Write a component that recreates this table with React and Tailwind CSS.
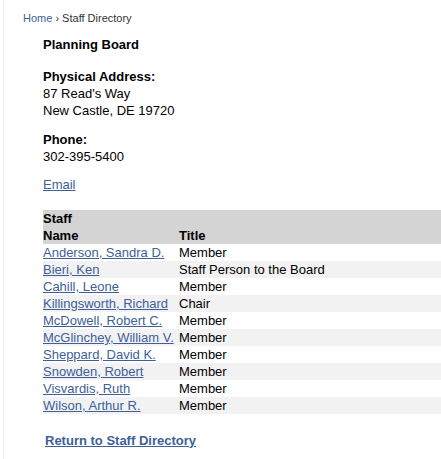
const staff = [
  { name: 'Anderson, Sandra D.', title: 'Member' },
  { name: 'Bieri, Ken', title: 'Staff Person to the Board' },
  { name: 'Cahill, Leone', title: 'Member' },
  { name: 'Killingsworth, Richard', title: 'Chair' },
  { name: 'McDowell, Robert C.', title: 'Member' },
  { name: 'McGlinchey, William V.', title: 'Member' },
  { name: 'Sheppard, David K.', title: 'Member' },
  { name: 'Snowden, Robert', title: 'Member' },
  { name: 'Visvardis, Ruth', title: 'Member' },
  { name: 'Wilson, Arthur R.', title: 'Member' },
]

export default function App() {
  return (
    <div className="min-h-screen bg-white font-['Liberation_Sans',Arial,sans-serif] text-black">
      <div className="ml-[3px] min-h-screen border-l border-[#f3f3f3] pb-4">
        {/* breadcrumb */}
        <div className="pl-[19px] pt-[11px] text-[11px] leading-[14px] text-[#333]">
          <a href="#" className="text-[#3e5f99]">Home</a> › Staff Directory
        </div>

        <div className="pl-[39px] text-[13px] leading-[17px]">
          <h1 className="mt-[10.5px] font-bold">Planning Board</h1>

          <div className="mt-[15px]">
            <div className="font-bold">Physical Address:</div>
            <div>87 Read's Way</div>
            <div>New Castle, DE 19720</div>
          </div>

          <div className="mt-[12px]">
            <div className="font-bold">Phone:</div>
            <div>302-395-5400</div>
          </div>

          <div className="mt-[11px]">
            <a href="#" className="text-[#3e5f99] underline">Email</a>
          </div>

          <table className="mt-[17.5px] w-full border-collapse">
            <thead className="bg-[#d4d4d4]">
              <tr>
                <th colSpan={2} className="h-[17px] p-0 text-left font-bold">Staff</th>
              </tr>
              <tr>
                <th className="h-[17px] w-[136px] p-0 text-left font-bold">Name</th>
                <th className="h-[17px] p-0 text-left font-bold">Title</th>
              </tr>
            </thead>
            <tbody>
              {staff.map((s, i) => (
                <tr key={s.name} className={i % 2 === 1 ? 'bg-[#f2f2f2]' : 'bg-white'}>
                  <td className="h-[17px] whitespace-nowrap p-0">
                    <a href="#" className="text-[#3e5f99] underline">{s.name}</a>
                  </td>
                  <td className="h-[17px] whitespace-nowrap p-0">{s.title}</td>
                </tr>
              ))}
            </tbody>
          </table>

          <div className="mt-[17.5px] pl-[2px]">
            <a href="#" className="font-bold text-[#3e5f99] underline">Return to Staff Directory</a>
          </div>
        </div>
      </div>
    </div>
  )
}
